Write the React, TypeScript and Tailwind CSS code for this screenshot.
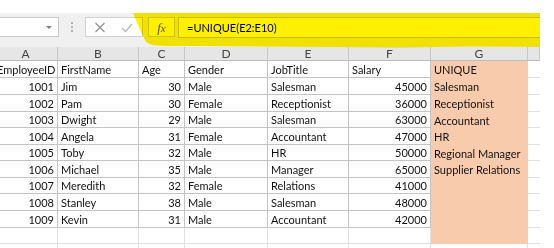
import React from "react";

const rows: (string | number)[][] = [
  ["EmployeeID", "FirstName", "Age", "Gender", "JobTitle", "Salary", "UNIQUE"],
  [1001, "Jim", 30, "Male", "Salesman", 45000, "Salesman"],
  [1002, "Pam", 30, "Female", "Receptionist", 36000, "Receptionist"],
  [1003, "Dwight", 29, "Male", "Salesman", 63000, "Accountant"],
  [1004, "Angela", 31, "Female", "Accountant", 47000, "HR"],
  [1005, "Toby", 32, "Male", "HR", 50000, "Regional Manager"],
  [1006, "Michael", 35, "Male", "Manager", 65000, "Supplier Relations"],
  [1007, "Meredith", 32, "Female", "Relations", 41000, ""],
  [1008, "Stanley", 38, "Male", "Salesman", 48000, ""],
  [1009, "Kevin", 31, "Male", "Accountant", 42000, ""],
];

const heights = [
  "h-[17px]",
  "h-[17px]",
  "h-[17px]",
  "h-[16px]",
  "h-[17px]",
  "h-[16px]",
  "h-[17px]",
  "h-[16px]",
  "h-[17px]",
  "h-[17px]",
  "h-[16px]",
  "h-[10px]",
];

const letters = ["A", "B", "C", "D", "E", "F", "G", ""];

const gridCols =
  "grid grid-cols-[64px_81px_46px_83px_81px_82px_97px_12px] ml-[-6px]";

export default function App() {
  return (
    <div className="w-[554px] h-[248px] bg-white overflow-hidden relative font-['Lato',sans-serif] text-[#111111]">
      <div className="w-[540px]">
        <div className="h-[13px] bg-white" />
        {/* toolbar */}
        <div className="h-[34px] bg-[#f0f0f0] flex items-start pt-[4px]">
          <div className="w-[59px] h-[20px] bg-white border border-l-0 border-[#c8c8c8] flex items-center justify-end pr-[6px]">
            <div className="w-0 h-0 border-l-[3px] border-r-[3px] border-t-[3px] border-l-transparent border-r-transparent border-t-[#808080]" />
          </div>
          <div className="w-[26px] h-[20px] flex flex-col items-center justify-center gap-[2px]">
            <div className="w-[2px] h-[2px] bg-[#b0b0b0]" />
            <div className="w-[2px] h-[2px] bg-[#b0b0b0]" />
            <div className="w-[2px] h-[2px] bg-[#b0b0b0]" />
          </div>
          <div className="w-[58px] h-[20px] bg-white border border-[#d0d0d0] flex items-center pl-[8px] gap-[15px]">
            <svg width="12" height="11" viewBox="0 0 12 11">
              <path d="M1.5 1 L10.5 10 M10.5 1 L1.5 10" stroke="#8a8a8a" strokeWidth="1.1" fill="none" />
            </svg>
            <svg width="12" height="11" viewBox="0 0 12 11">
              <path d="M1 6 L4.5 9.5 L11 2" stroke="#b8b8b8" strokeWidth="1.3" fill="none" />
            </svg>
          </div>
          <div className="w-[5px]" />
          <div className="w-[27px] h-[20px] bg-white border border-[#d0d0d0] flex items-center justify-center">
            <span className="font-['Liberation_Serif',serif] italic text-[13px] text-[#555555] leading-none">
              f<span className="text-[11px]">x</span>
            </span>
          </div>
          <div className="w-[3px]" />
          <div className="flex-1 h-[21px] bg-white border border-[#c8c8c8] border-r-0 flex items-center pl-[8px]">
            <span className="text-[11px] leading-none text-black">=UNIQUE(E2:E10)</span>
          </div>
        </div>

        {/* column headers */}
        <div className={gridCols + " h-[14px] bg-[#e6e6e6] border-b border-[#bcbcbc]"}>
          {letters.map((l, i) => (
            <div
              key={i}
              className="border-r border-[#c8c8c8] flex items-center justify-center text-[12px] text-[#444444] leading-none"
            >
              {l}
            </div>
          ))}
        </div>

        {/* rows */}
        {heights.map((h, r) => {
          const data = rows[r];
          return (
            <div key={r} className={gridCols + " " + h}>
              {letters.map((_, c) => {
                const isG = c === 6;
                const inData = data !== undefined && c < 6;
                const peach = isG && r < 11;
                const val = data ? data[c] : undefined;
                const num = typeof val === "number";
                let cls =
                  "flex items-center text-[11px] leading-none whitespace-nowrap overflow-visible px-[3px] ";
                if (peach) {
                  cls += "bg-[#f8cbad] ";
                } else if (inData) {
                  cls += "border-r border-b border-[#c4c4c4] ";
                } else if (c === 7) {
                  cls += "border-b border-[#e0e0e0] ";
                } else {
                  cls += "border-r border-b border-[#e0e0e0] ";
                }
                cls += num ? "justify-end" : "justify-start";
                return (
                  <div key={c} className={cls}>
                    {val !== undefined && val !== "" ? String(val) : ""}
                  </div>
                );
              })}
            </div>
          );
        })}
      </div>

      {/* highlighter mark over the formula bar */}
      <svg
        className="absolute left-0 top-0 mix-blend-multiply pointer-events-none"
        width="554"
        height="60"
        viewBox="0 0 554 60"
      >
        <path
          d="M133 13 L540 13 L540 47 L470 46.5 L400 47.5 L330 47 L260 46.5 L200 46 L165 46 L152 45 L146 42 L141 32 Z"
          fill="#fff000"
        />
      </svg>
    </div>
  );
}
